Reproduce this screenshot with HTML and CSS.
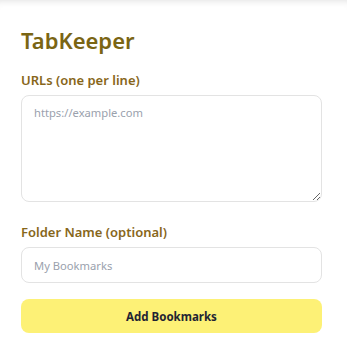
FILE: index.html
```
<!DOCTYPE html>
<html lang="en">
<head>
  <meta charset="UTF-8" />
  <meta name="viewport" content="width=device-width, initial-scale=1.0"/>
  <title>TabKeeper</title>
  <link rel="stylesheet" href="styles.css">
</head>
<body>
  <div class="container">
    <h1>TabKeeper</h1>

    <label for="urls">URLs (one per line)</label>
    <textarea id="urls" placeholder="https://example.com"></textarea>

    <label for="folder">Folder Name (optional)</label>
    <input type="text" id="folder" placeholder="My Bookmarks" />

    <button id="addBtn">Add Bookmarks</button>
  </div>
</body>
</html>
```

FILE: styles.css
```
body {
  margin: 0;
  font-family: 'Noto Sans', sans-serif;
  background: #fff;
  box-shadow: inset 0 7px 7px -6px rgba(0,0,0,0.12);
  min-height: 356px;
}

.container {
  padding: 25px 25px 20px 21px;
  display: flex;
  flex-direction: column;
}

h1 {
  margin: 0 0 16px;
  font-size: 22px;
  font-weight: 600;
  color: #7a6514;
}

label {
  font-size: 13px;
  font-weight: 600;
  color: #87661a;
  margin-bottom: 6px;
}

textarea, input {
  box-sizing: border-box;
  width: 100%;
  border: 1px solid #e3e3e3;
  border-radius: 8px;
  padding: 9px 12px;
  font-family: inherit;
  font-size: 11.2px;
  color: #333;
  background: #fff;
}

textarea {
  height: 107px;
  resize: vertical;
  margin-bottom: 21px;
}

input {
  height: 36px;
  margin-bottom: 16px;
}

::placeholder {
  color: #9aa1ad;
}

button {
  height: 34px;
  border: none;
  border-radius: 8px;
  background: #fdf176;
  color: #1f2433;
  font-family: inherit;
  font-size: 11.5px;
  font-weight: 700;
  cursor: pointer;
}
```
